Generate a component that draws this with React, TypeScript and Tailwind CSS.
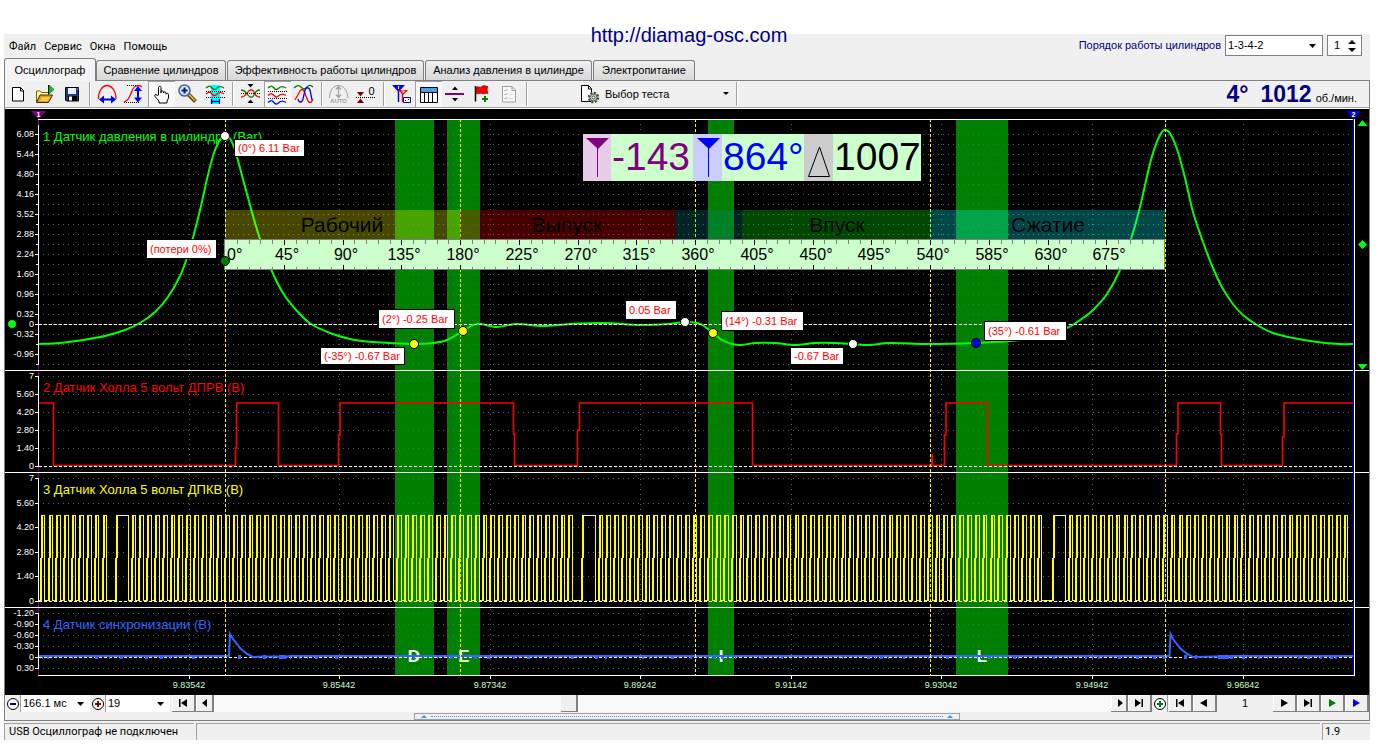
import React, { useState } from "react";

type Point = [number, number];

const SANS = "font-['Liberation_Sans',Arial,sans-serif]";
const TAHOMA = "font-[Roboto,'Noto_Sans',sans-serif]";

/* ---------- toolbar icons ---------- */

function Icon({ children }: { children: React.ReactNode }) {
  return (
    <svg width="27" height="26" viewBox="0 0 27 26" fill="none" aria-hidden="true">
      {children}
    </svg>
  );
}

const icons: Record<string, React.ReactNode> = {
  new: <path d="M7.5 6.5h8l3 3v10.500h-11zM15.500 6.500v3.500h3" fill="#fff" stroke="#000" />,
  open: (
    <>
      <path d="M4.500 21v-11h4l1 1.500h7v3" fill="#ffff99" stroke="#806000" />
      <path d="M4.500 21.500l3.500-7.500h12.500l-4 7.500z" fill="#d8a020" stroke="#403000" />
      <path d="M8 20l2-4h8l-2 4z" fill="#f0c850" />
      <path d="M16.500 4v9" stroke="#000" />
      <path d="M17 4l5 4.500-5 4.500z" fill="#00c830" stroke="#006000" strokeWidth=".6" />
    </>
  ),
  save: (
    <>
      <path d="M6.500 6.500h13v13.500h-12l-1-1z" fill="#203a80" stroke="#000" />
      <path d="M9 7h8v6h-8z" fill="#e8f0ff" />
      <path d="M9 15h9v5h-9z" fill="#000" />
      <path d="M10 15.500h3v4h-3z" fill="#fff" />
      <path d="M18 8h1.500" stroke="#9ac" />
    </>
  ),
  period: (
    <>
      <path d="M4.500 18C4.500 9 9 4.500 13 4.500S22 9 22 18" stroke="#f00" strokeWidth="1.300" />
      <path d="M7 18.500h13" stroke="#00f" strokeWidth="2" />
      <path d="M5 18.500l5-4v8zM22 18.500l-5-4v8z" fill="#00f" />
    </>
  ),
  amplitude: (
    <>
      <path d="M6 4.500h14M3 21.500h15" stroke="#000" strokeDasharray="1 1" />
      <path d="M3 21C10 20 10 7 14 5.500C16 4.500 19 4.500 21 6" stroke="#f00" strokeWidth="1.300" />
      <path d="M17 7v13" stroke="#00f" strokeWidth="2" />
      <path d="M17 5l-4 5h8zM17 21.500l-4-5h8z" fill="#00f" />
    </>
  ),
  hand: (
    <path
      d="M10.500 14V6.500c0-1.500 2.500-1.500 2.500 0V12v-1.500c0-1 2.500-1 2.500.5v1c0-1.500 2.500-1.500 2.500.2v1c0-1.200 2.500-1.200 2.500.3V17l-1.500 3v2h-8v-2L7 15.500c-1-2 .8-2.500 2-1.200z"
      fill="#fff"
      stroke="#000"
    />
  ),
  zoom: (
    <>
      <path d="M13.500 13.500l7 7" stroke="#705010" strokeWidth="4" />
      <path d="M14 13.500l6 6" stroke="#e8b848" strokeWidth="1.500" />
      <circle cx="9.500" cy="9.500" r="5.500" fill="#cfeaff" stroke="#4868a0" strokeWidth="1.600" />
      <path d="M6.500 9.500h6M9.500 6.500v6" stroke="#102060" strokeWidth="2" />
    </>
  ),
  range: (
    <>
      <path d="M9 4h9v19h-9z" fill="#0ff" />
      <path d="M4 7c3-2.500 4-2.500 6 0s3 2 5 0 4-2 7 0" stroke="#008000" strokeWidth="1.300" />
      <path d="M4 10.500h19" stroke="#000" strokeDasharray="1 1" />
      <path d="M4 13c3-2.500 4-2.500 6 0s3 2 5 0 4-2 7 0" stroke="#f00" strokeWidth="1.300" />
      <path d="M4 16.500h19" stroke="#000" strokeDasharray="1 1" />
      <path d="M9.500 18v5M17.500 18v5M9 20.500h9" stroke="#0000a0" strokeWidth="1.300" />
    </>
  ),
  center: (
    <>
      <path d="M10.500 3h6l-3 3.500zM10.500 22h6l-3-3.500z" fill="#000" />
      <path d="M4 12.500h19" stroke="#000" strokeDasharray="1 1" />
      <path d="M4 16c3 0 4-1 6-4s5-5 7-1 3 5 6 5" stroke="#f00" strokeWidth="1.300" />
      <path d="M4 9c3 0 4 1 6 4s5 5 7 1 3-5 6-5" stroke="#008000" strokeWidth="1.300" />
    </>
  ),
  split: (
    <>
      <path d="M4 7c3-2.500 4-2.500 6 0s3 2 5 0 4-2 7 0" stroke="#008000" strokeWidth="1.300" />
      <path d="M4 10.500h19M4 17.500h19" stroke="#000" strokeDasharray="1 1" />
      <path d="M4 14.500c3-2.500 4-2.500 6 0s3 2 5 0 4-2 7 0" stroke="#f00" strokeWidth="1.300" />
      <path d="M4 21.500c3-2.500 4-2.500 6 0s3 2 5 0 4-2 7 0" stroke="#00f" strokeWidth="1.300" />
    </>
  ),
  overlay: (
    <>
      <path d="M3 7c3-2.500 5-3.500 7-1s4 2.500 6 0 4-2 6 0" stroke="#008000" strokeWidth="1.300" />
      <path d="M4 19l5-9c1.500-2 2.500-2 4 0l4 10c1 2 3 2 4 0l1-2" stroke="#f00" strokeWidth="1.300" />
      <path d="M7 18c1 4 4 4 5 0l2-9c1-3 4-3 5 0l2 10" stroke="#00f" strokeWidth="1.300" />
    </>
  ),
  auto: (
    <>
      <path d="M3.500 17C4 8 8 4.500 12.500 4.500S21 8 22 17" stroke="#a0a0a0" />
      <path d="M12.500 6v10M10 8.500l2.500-3 2.500 3M10 13.500l2.500 3 2.500-3" stroke="#a0a0a0" strokeWidth="1.200" />
      <text x="12.500" y="22" fontSize="6" fontWeight="bold" textAnchor="middle" fill="#a0a0a0">AUTO</text>
    </>
  ),
  zero: (
    <>
      <path d="M4 11h7l-3.500 4.500zM4 22h7l-3.500-4.500z" fill="#800000" />
      <path d="M3 16.500h19" stroke="#000" strokeDasharray="1 1" />
      <text x="18.500" y="14" fontSize="11" textAnchor="middle" fill="#000">0</text>
    </>
  ),
  markers: (
    <>
      <path d="M4 4h13l-6.500 7z" fill="#00f" />
      <path d="M10.500 8v13" stroke="#00f" strokeWidth="1.500" />
      <path d="M10 9h10l-5 5z" fill="#f00" />
      <path d="M14.500 12v9" stroke="#f00" strokeWidth="1.500" />
      <path d="M10.500 5v3M13.500 10h3l-2 2" stroke="#fff" />
      <path d="M15.500 16.500h7v5h-7z" fill="#fff" stroke="#000080" />
      <path d="M17 19.500h1m2-1h1" stroke="#000080" />
    </>
  ),
  table: (
    <>
      <path d="M5.500 6.500h17v15h-17z" fill="#fff" stroke="#000" />
      <path d="M6 7h16v4H6z" fill="#4aa0e8" />
      <path d="M5 11.500h18M9.500 11v10M13.500 11v10M17.500 11v10" stroke="#000" />
    </>
  ),
  divide: (
    <>
      <path d="M3 13h19" stroke="#800080" strokeWidth="2" />
      <path d="M10 9h6l-3-3.500zM10 17h6l-3 3.500z" fill="#000" />
    </>
  ),
  flag: (
    <>
      <path d="M6.500 5v15.500" stroke="#000" strokeWidth="1.500" />
      <path d="M7 6.500c2-2 4 1 6-1s4 0 6 0l-1 3 1 4c-2-1-4 1-6 0s-4 1-6 0z" fill="#f00" stroke="#500" strokeWidth=".6" />
      <path d="M16 15v6M13 18h6" stroke="#008000" strokeWidth="2" />
    </>
  ),
  checklist: (
    <>
      <path d="M6.500 5.500h9.500l3.500 3.500v12h-13zM16 5.500v4h3.500" fill="#f8f8f8" stroke="#a0a0a0" />
      <path d="M8.500 9l1 1 2-2M8.500 13l1 1 2-2M8.500 17l1 1 2-2" stroke="#a0a0a0" />
      <path d="M13 13.500h4M13 17.500h4" stroke="#ddd" />
    </>
  ),
};

interface Tool {
  id: string;
  label: string;
  pressed?: boolean;
}

const toolGroups: Tool[][] = [
  [
    { id: "new", label: "Новый" },
    { id: "open", label: "Открыть" },
    { id: "save", label: "Сохранить" },
  ],
  [
    { id: "period", label: "Период" },
    { id: "amplitude", label: "Амплитуда" },
    { id: "hand", label: "Перемещение", pressed: true },
    { id: "zoom", label: "Масштаб" },
    { id: "range", label: "Диапазон" },
  ],
  [
    { id: "center", label: "По центру" },
    { id: "split", label: "Раздельно", pressed: true },
    { id: "overlay", label: "Совместно" },
  ],
  [
    { id: "auto", label: "Авто" },
    { id: "zero", label: "Ноль" },
  ],
  [
    { id: "markers", label: "Маркеры" },
    { id: "table", label: "Таблица", pressed: true },
    { id: "divide", label: "Разделить" },
    { id: "flag", label: "Добавить флаг" },
    { id: "checklist", label: "Отчёт" },
  ],
];

function Separator() {
  return (
    <div className="flex w-2 shrink-0 justify-center py-px">
      <div className="w-0.5 border-l border-[#a0a0a0] bg-white" />
    </div>
  );
}

function Toolbar() {
  return (
    <div className="flex h-[26px] items-stretch">
      {toolGroups.map((group, i) => (
        <React.Fragment key={i}>
          {group.map((t) => (
            <button
              key={t.id}
              type="button"
              aria-label={t.label}
              aria-pressed={t.pressed ?? false}
              className={
                t.pressed
                  ? "w-[27px] shrink-0 bg-[#f8f8f8] shadow-[inset_1px_1px_0_#a0a0a0]"
                  : "w-[27px] shrink-0"
              }
            >
              <Icon>{icons[t.id]}</Icon>
            </button>
          ))}
          <Separator />
        </React.Fragment>
      ))}
      <button type="button" className="ml-12 flex w-[154px] shrink-0 items-center text-[11px]">
        <svg width="22" height="22" viewBox="0 0 22 22" fill="none" aria-hidden="true">
          <path d="M2.500 2.500h7l3 3v13h-10zM9.500 2.500v3.500h3" fill="#fff" stroke="#000" />
          <circle cx="14.500" cy="14.500" r="4.500" fill="#c8dcc8" stroke="#405040" strokeWidth="2.500" strokeDasharray="2 1.500" />
          <circle cx="14.500" cy="14.500" r="3.500" fill="#c8dcc8" stroke="#506850" />
          <circle cx="14.500" cy="14.500" r="1.500" fill="#fff" stroke="#405040" />
        </svg>
        <span className="ml-1 grow text-left">Выбор теста</span>
        <svg width="6" height="4" viewBox="0 0 6 4" className="mr-1" aria-hidden="true">
          <path d="M0 0h6L3 3z" fill="#000" />
        </svg>
      </button>
      <Separator />
      <div className="ml-auto flex items-baseline pr-3 text-[#000080]">
        <span className="text-[23px] leading-[26px] font-bold">4°</span>
        <span className="ml-3 text-[23px] leading-[26px] font-bold">1012</span>
        <span className="ml-1 text-[11px] text-black">об./мин.</span>
      </div>
    </div>
  );
}

/* ---------- chart data ---------- */

const pressure: Point[] = [
  [39, 344], [60, 343], [83, 340], [105, 336], [125, 330], [140, 323], [155, 312], [168, 297], [180, 276],
  [188, 255], [194, 234], [201, 206], [207, 179], [213, 156], [218, 143], [222, 137], [225, 135], [229, 137],
  [234, 147], [240, 168], [247, 194], [253, 216], [260, 239], [271, 269], [283, 293], [297, 311], [311, 324],
  [330, 333], [350, 339], [373, 342], [413, 344], [433, 343], [447, 340], [463, 331], [473, 325], [481, 324],
  [497, 327], [517, 324], [543, 326], [570, 324], [603, 323], [640, 325], [668, 324], [685, 322], [697, 323],
  [704, 326], [713, 333], [722, 340], [732, 344], [742, 345], [755, 343], [775, 343], [795, 345], [815, 343],
  [835, 343], [853, 344], [870, 345], [890, 343], [930, 344], [976, 343], [1010, 341], [1040, 337], [1067, 328],
  [1083, 318], [1093, 310], [1107, 294], [1120, 270], [1131, 239], [1140, 207], [1148, 172], [1153, 153],
  [1160, 135], [1165, 130], [1171, 135], [1178, 152], [1185, 178], [1193, 212], [1203, 242], [1213, 268],
  [1223, 289], [1233, 304], [1243, 315], [1257, 325], [1273, 333], [1293, 338], [1317, 342], [1340, 344],
  [1353, 344],
];

function smooth(p: Point[]): string {
  let d = `M${p[0][0]} ${p[0][1]}`;
  for (let i = 0; i < p.length - 1; i++) {
    const a = p[Math.max(i - 1, 0)];
    const b = p[i];
    const c = p[i + 1];
    const e = p[Math.min(i + 2, p.length - 1)];
    d += `C${b[0] + (c[0] - a[0]) / 6} ${b[1] + (c[1] - a[1]) / 6} ${c[0] - (e[0] - b[0]) / 6} ${c[1] - (e[1] - b[1]) / 6} ${c[0]} ${c[1]}`;
  }
  return d;
}

const camshaft =
  "M39 403H53.500V465.500H230V467H231V465.500H235.500V448H236.500V403H278.500V465.500H338.500V435H340V403H513.500V434H514.500V465.500H577.500V430H579.500V403H752.500V465.500H932V455H932.500V465.500H944.500V435H946V403H987.500V465.500H1176.500V434H1178V403H1220.500V434H1221.500V465.500H1282.500V437H1284V403H1353";

function crankshaft() {
  const highs: Point[] = [];
  for (let i = 8; i >= 0; i--) highs.push([102.5 - i * 7.7, 106 - i * 7.7]);
  highs.push([115.5, 127.5]);
  for (let i = 0; i <= 56; i++) highs.push([131.5 + i * 7.8, 135.3 + i * 7.8]);
  highs.push([581.5, 594.5]);
  for (let i = 0; i <= 56; i++) highs.push([598.5 + i * 7.84, 602.3 + i * 7.84]);
  highs.push([1052.5, 1064.5]);
  for (let x = 1068.5; x < 1350; x += 7.86) highs.push([x, x + 3.8]);
  let d = "M39 600.500";
  let rises = "";
  for (const [from, to] of highs) {
    const a = Math.round(from);
    const b = Math.round(to) + 0.5;
    d += `H${a + 0.5}V515.500H${b}V600.500`;
    rises += `M${a} 601V558M${a + 1} 558V515`;
  }
  return { d: d + "H1353", rises };
}

const crank = crankshaft();

function syncNoise(): string {
  let d = "";
  let seed = 7;
  for (let x = 42; x < 1350; ) {
    seed = (seed * 73 + 41) % 997;
    d += `M${x} 657h${1 + (seed % 3)}`;
    x += 5 + (seed % 23);
  }
  return d;
}

const bands: Point[] = [[395, 434], [447, 480], [708, 734], [956, 1008]];
const strokes = [225, 460, 695, 930, 1165];

const channels = [
  { color: "#00ff00", title: "1 Датчик давления в цилиндре (Bar)", titleY: 141, zero: 324, axis: [125, 365],
    grid: Array.from({ length: 24 }, (_, i) => 134 + i * 10),
    ticks: [["6.08", 134], ["5.44", 154], ["4.80", 174], ["4.16", 194], ["3.52", 214], ["2.88", 234], ["2.24", 254], ["1.60", 274], ["0.96", 294], ["0.32", 314], ["0", 324], ["-0.32", 334], ["-0.96", 354]] },
  { color: "#ff0000", title: "2 Датчик Холла 5 вольт ДПРВ (В)", titleY: 392, zero: 466, axis: [376, 466],
    grid: [376, 394, 412, 430, 448],
    ticks: [["7", 376], ["5.60", 394], ["4.20", 412], ["2.80", 430], ["1.40", 448], ["0", 466]] },
  { color: "#ffff00", title: "3 Датчик Холла 5 вольт ДПКВ (В)", titleY: 494, zero: 601, axis: [478, 601],
    grid: [478, 503, 527, 552, 576],
    ticks: [["7", 478], ["5.60", 503], ["4.20", 527], ["2.80", 552], ["1.40", 576], ["0", 601]] },
  { color: "#3366ff", title: "4 Датчик синхронизации (В)", titleY: 629, zero: 657, axis: [613, 668],
    grid: [613, 624, 635, 646, 668],
    ticks: [["-1.20", 613], ["-0.90", 624], ["-0.60", 635], ["-0.30", 646], ["0", 657], ["0.30", 668]] },
] as { color: string; title: string; titleY: number; zero: number; axis: Point; grid: number[]; ticks: [string, number][] }[];

const times: [string, number][] = [
  ["9.83542", 189], ["9.85442", 339], ["9.87342", 490], ["9.89242", 640],
  ["9.91142", 791], ["9.93042", 941], ["9.94942", 1092], ["9.96842", 1243],
];

const phases = [
  { label: "Рабочий", x: 225, end: 460, center: 342, fill: "#ffff00" },
  { label: "Выпуск", x: 460, end: 675, center: 567, fill: "#ff0000" },
  { label: "", x: 675, end: 742, center: 708, fill: "#008080" },
  { label: "Впуск", x: 742, end: 930, center: 837, fill: "#00ff00" },
  { label: "Сжатие", x: 930, end: 1165, center: 1048, fill: "#00ffff" },
];

const notes = [
  { text: "(0°) 6.11 Bar", x: 235, y: 140, w: 69, h: 16 },
  { text: "(потери 0%)", x: 147, y: 240, w: 69, h: 18 },
  { text: "(2°) -0.25 Bar", x: 379, y: 310, w: 75, h: 18 },
  { text: "(-35°) -0.67 Bar", x: 321, y: 348, w: 83, h: 16 },
  { text: "0.05 Bar", x: 626, y: 301, w: 50, h: 18 },
  { text: "(14°) -0.31 Bar", x: 722, y: 312, w: 81, h: 18 },
  { text: "-0.67 Bar", x: 791, y: 348, w: 52, h: 16 },
  { text: "(35°) -0.61 Bar", x: 985, y: 322, w: 81, h: 18 },
];

const dots = [
  { x: 225, y: 136, fill: "#fff" },
  { x: 225, y: 261, fill: "#008000" },
  { x: 414, y: 344, fill: "#ff0" },
  { x: 463, y: 331, fill: "#ff0" },
  { x: 685, y: 322, fill: "#fff" },
  { x: 713, y: 333, fill: "#ff0" },
  { x: 853, y: 344, fill: "#fff" },
  { x: 976, y: 343, fill: "#00f" },
  { x: 12, y: 324, fill: "#0f0" },
];

function Ruler() {
  return (
    <g shapeRendering="crispEdges">
      <rect x="225" y="239" width="940" height="31" fill="#ccffcc" />
      <path d="M225 239.500H1165M225 269.500H1165M224.500 239V270M1164.500 239V270" stroke="#808080" />
      {Array.from({ length: 79 }, (_, i) => {
        const x = Math.round(225 + (i + 1) * 11.75) + 0.5;
        const major = (i + 1) % 5 === 0;
        return major ? (
          <path key={i} d={`M${x} 240v5M${x} 265v5`} stroke="#000" />
        ) : (
          <path key={i} d={`M${x} 240v4M${x} 267v3`} stroke="#808080" />
        );
      })}
      <text x="227" y="260" fontSize="16">0°</text>
      {Array.from({ length: 15 }, (_, i) => (
        <text key={i} x={Math.round(228 + (i + 1) * 58.75)} y="260" fontSize="16" textAnchor="middle">
          {`${(i + 1) * 45}°`}
        </text>
      ))}
    </g>
  );
}

function Readout() {
  return (
    <g>
      <rect x="583" y="134" width="338" height="47" fill="#ccffcc" />
      <rect x="583" y="134" width="28" height="47" fill="#e6cce6" />
      <rect x="693" y="134" width="29" height="47" fill="#ccccff" />
      <rect x="804" y="134" width="29" height="47" fill="#cccccc" />
      <path d="M586 138h23l-11 11z" fill="#800080" />
      <path d="M597.500 148v29" stroke="#800080" shapeRendering="crispEdges" />
      <path d="M697 138h23l-11 11z" fill="#00f" />
      <path d="M708.500 148v29" stroke="#00f" shapeRendering="crispEdges" />
      <path d="M819.500 147L808.500 176.500H829.500Z" fill="none" stroke="#000" />
      <text x="612" y="170" fontSize="39" fill="#800080">-143</text>
      <text x="723" y="170" fontSize="39" fill="#0000ff">864°</text>
      <text x="834" y="170" fontSize="39" fill="#000">1007</text>
    </g>
  );
}

function Chart() {
  return (
    <svg viewBox="5 109 1364 586" className={`block h-auto w-full bg-black ${SANS}`} role="img" aria-label="Осциллограммы">
      <g shapeRendering="crispEdges">
        {bands.map(([a, b]) => (
          <rect key={a} x={a} y="120" width={b - a} height="555" fill="#008000" />
        ))}
        {channels.flatMap((c) => c.grid).map((y) => (
          <path key={y} d={`M43 ${y + 0.5}H1352`} stroke="#606060" strokeDasharray="1 4" />
        ))}
        {times.map(([, x]) => (
          <path key={x} d={`M${x + 0.5} 124V674`} stroke="#606060" strokeDasharray="1 4" />
        ))}
      </g>

      {channels.map((c) => (
        <text key={c.title} x="43" y={c.titleY} fontSize="13" fill={c.color}>{c.title}</text>
      ))}

      <path d={smooth(pressure)} fill="none" stroke="#00ff00" strokeWidth="2" />
      <path d={camshaft} fill="none" stroke="#ff0000" strokeWidth="1.600" />
      <path d={crank.d} fill="none" stroke="#ffff00" shapeRendering="crispEdges" />
      <path d={crank.rises} fill="none" stroke="#ffff00" strokeWidth="2" shapeRendering="crispEdges" />

      {[["D", 414], ["E", 464], ["I", 721], ["L", 982]].map(([s, x]) => (
        <text key={s} x={x} y="662" fontSize="17" fontWeight="bold" textAnchor="middle" fill="#fff">{s}</text>
      ))}

      <g shapeRendering="crispEdges">
        {channels.map((c) => (
          <path key={c.zero} d={`M39 ${c.zero + 0.5}H1353`} stroke="#fff" strokeDasharray="3 2" />
        ))}
      </g>

      <path
        d="M39 656H229L230 634L233 639L240 648L247 654L253 657L262 656.500H278L284 657L290 656H1169.500L1170.500 634L1173 639L1180 648L1187 654L1193 657L1215 656.500H1228L1235 656H1353"
        fill="none"
        stroke="#3366ff"
        strokeWidth="2"
      />
      <path d={syncNoise()} stroke="#3366ff" strokeWidth="4" shapeRendering="crispEdges" />
      <path d="M279 657h7M1220 657h9" stroke="#3366ff" strokeWidth="4" />

      <g shapeRendering="crispEdges">
        {strokes.map((x) => (
          <path key={x} d={`M${x + 0.5} 119V675`} stroke="#ffff00" strokeDasharray="3 2" />
        ))}
        {phases.map((p) => (
          <rect key={p.x} x={p.x} y="210" width={p.end - p.x} height="30" fill={p.fill} fillOpacity="0.280" />
        ))}
      </g>
      {phases.map((p) => (
        <text key={p.center} x={p.center} y="232" fontSize="21" textAnchor="middle" fill="#000">{p.label}</text>
      ))}
      <Ruler />

      <g shapeRendering="crispEdges" fill="none">
        <path d="M38.500 117V675" stroke="#800080" />
        {channels.map((c) => (
          <path key={c.title} d={`M38.500 ${c.axis[0]}V${c.axis[1]}`} stroke="#fff" />
        ))}
        {channels.flatMap((c) => c.ticks).map(([t, y]) => (
          <path key={t + y} d={`M35 ${y + 0.5}h4`} stroke="#fff" />
        ))}
        {channels[0].grid.map((y) => (
          <path key={y} d={`M36 ${y + 0.5}h3`} stroke="#fff" />
        ))}
        {times.map(([, x]) => (
          <path key={x} d={`M${x + 0.5} 675v4`} stroke="#fff" />
        ))}
        <path d="M38 119.500H1355M5 370.500H1369M5 472.500H1369M5 607.500H1369M38 675.500H1355M1354.500 119V676" stroke="#fff" />
        <path d="M1353.500 117V675" stroke="#0000ff" />
      </g>

      {channels.flatMap((c) => c.ticks).map(([t, y]) => (
        <text key={t + y} x="34" y={y + 3} fontSize="9" textAnchor="end" fill="#fff">{t}</text>
      ))}
      {times.map(([t, x]) => (
        <text key={t} x={x} y="688" fontSize="9" textAnchor="middle" fill="#ccffcc">{t}</text>
      ))}

      {dots.map((d) => (
        <circle key={`${d.x}-${d.y}`} cx={d.x} cy={d.y} r="4.500" fill={d.fill} stroke="#000" />
      ))}
      {notes.map((n) => (
        <g key={n.text}>
          <rect x={n.x - 0.5} y={n.y - 0.5} width={n.w + 1} height={n.h + 1} fill="#fff" stroke="#000" />
          <text x={n.x + 3} y={n.y + n.h / 2 + 4} fontSize="11" fill="#ff0000">{n.text}</text>
        </g>
      ))}
      <Readout />

      <path d="M31 111h15l-7.500 8z" fill="#800080" />
      <text x="38.500" y="117" fontSize="7" fontWeight="bold" textAnchor="middle" fill="#fff">1</text>
      <path d="M1346 111h15l-7.500 8z" fill="#0000ff" />
      <text x="1353.500" y="117" fontSize="7" fontWeight="bold" textAnchor="middle" fill="#fff">2</text>
      <path d="M1357.500 126h10l-5-6zM1362.500 240l4.500 4.500-4.500 4.500-4.500-4.500zM1357.500 364h10l-5 6z" fill="#00ff00" />
    </svg>
  );
}

/* ---------- form controls ---------- */

function Combo({ label, options, className }: { label: string; options: string[]; className: string }) {
  return (
    <div className={`relative shrink-0 bg-white ${className}`}>
      <select aria-label={label} className="block h-full w-full appearance-none bg-transparent pl-0.5 text-[11px] outline-none">
        {options.map((o) => (
          <option key={o}>{o}</option>
        ))}
      </select>
      <svg width="7" height="4" viewBox="0 0 7 4" className="pointer-events-none absolute inset-y-0 right-1.5 my-auto" aria-hidden="true">
        <path d="M0 0h7L3.500 4z" fill="#000" />
      </svg>
    </div>
  );
}

const transport: Record<string, string> = {
  first: "M6 2h1.500v8H6zM14 2v8L8 6z",
  back: "M13 2v8L6 6z",
  small: "M9 2v8l5-4z",
  smallBack: "M13 2v8L8 6z",
  play: "M7 2v8l7-4z",
  last: "M6 2v8l6-4zM12.500 2H14v8h-1.500z",
};

function NavButton({ label, shape, color = "#000", className }: { label: string; shape: string; color?: string; className: string }) {
  return (
    <button
      type="button"
      aria-label={label}
      className={`flex shrink-0 items-center justify-center border-r-2 border-b border-[#808080] bg-[#f0f0f0] shadow-[inset_1px_1px_0_#fff] ${className}`}
    >
      <svg width="20" height="12" viewBox="0 0 20 12" className="shrink-0" aria-hidden="true">
        <path d={transport[shape]} fill={color} />
      </svg>
    </button>
  );
}

function ScaleButton({ label, color, plus }: { label: string; color: string; plus: boolean }) {
  return (
    <button type="button" aria-label={label} className="flex w-4 shrink-0 items-center justify-center border-r border-[#a0a0a0] bg-[#f0f0f0]">
      <svg width="14" height="14" viewBox="0 0 14 14" fill="none" className="shrink-0" aria-hidden="true">
        <circle cx="7" cy="7" r="5.500" fill="#fff" stroke="#000" />
        <path d={plus ? "M4 7h6M7 4v6" : "M4 7h6"} stroke={color} strokeWidth="2" />
      </svg>
    </button>
  );
}

function TransportBar() {
  return (
    <div className="flex h-[17px]">
      <ScaleButton label="Уменьшить" color="#000080" plus={false} />
      <Combo label="Развёртка" options={["166.1 мс"]} className="w-[69px]" />
      <ScaleButton label="Увеличить" color="#800000" plus />
      <Combo label="Цикл" options={["19"]} className="w-16" />
      <NavButton label="К началу" shape="first" className="ml-0.5 w-6" />
      <NavButton label="Назад" shape="smallBack" className="w-[18px]" />
      <input
        type="range"
        aria-label="Положение"
        min={0}
        max={1000}
        defaultValue={394}
        className="h-full min-w-0 grow appearance-none bg-[#f9f9f9] [&::-webkit-slider-thumb]:h-[17px] [&::-webkit-slider-thumb]:w-[17px] [&::-webkit-slider-thumb]:appearance-none [&::-webkit-slider-thumb]:border-r-2 [&::-webkit-slider-thumb]:border-b [&::-webkit-slider-thumb]:border-[#808080] [&::-webkit-slider-thumb]:bg-[#f0f0f0]"
      />
      <NavButton label="Вперёд" shape="small" className="w-[17px]" />
      <NavButton label="К концу" shape="last" className="w-6" />
      <ScaleButton label="Добавить" color="#008000" plus />
      <NavButton label="Первый кадр" shape="first" className="ml-px w-6" />
      <NavButton label="Предыдущий кадр" shape="back" className="w-6" />
      <output className="w-14 text-center text-[11px] leading-[17px]">1</output>
      <NavButton label="Следующий кадр" shape="play" className="w-6" />
      <NavButton label="Последний кадр" shape="last" className="w-6" />
      <NavButton label="Пуск" shape="play" color="#008000" className="w-6" />
      <NavButton label="Запись" shape="play" color="#0000ff" className="w-6" />
    </div>
  );
}

/* ---------- page ---------- */

const tabs: [string, string][] = [
  ["Сравнение цилиндров", "w-[130px]"],
  ["Эффективность работы цилиндров", "w-[197px]"],
  ["Анализ давления в цилиндре", "w-[167px]"],
  ["Электропитание", "w-[102px]"],
];

export default function App() {
  const [frame, setFrame] = useState(1);
  return (
    <div className={`min-h-screen bg-white pt-[34px] pr-3 pl-1 text-black ${SANS}`}>
      <div className="relative bg-[#f0f0f0]">
        <a
          href="http://diamag-osc.com"
          className="absolute -top-[11px] left-1/2 -translate-x-1/2 pl-1 text-[20px] leading-6 text-[#000080]"
        >
          http://diamag-osc.com
        </a>
        <header className="flex h-6 items-start justify-between">
          <nav className={`flex gap-2 pt-[5px] pl-[5px] text-[11px] leading-4 ${TAHOMA}`}>
            {["Файл", "Сервис", "Окна", "Помощь"].map((m) => (
              <button key={m} type="button">{m}</button>
            ))}
          </nav>
          <div className="flex items-center gap-1 pt-px pr-2">
            <label htmlFor="firing-order" className="text-[11px] text-[#000080]">Порядок работы цилиндров</label>
            <div className="relative h-[21px] w-[98px] border border-[#808080] bg-white">
              <select id="firing-order" className="block h-full w-full appearance-none bg-transparent pl-0.5 text-[11px] outline-none">
                <option>1-3-4-2</option>
              </select>
              <svg width="7" height="4" viewBox="0 0 7 4" className="pointer-events-none absolute inset-y-0 right-1.5 my-auto" aria-hidden="true">
                <path d="M0 0h7L3.500 4z" fill="#000" />
              </svg>
            </div>
            <div className="flex h-[21px] w-[35px] border border-[#808080] bg-white">
              <input
                type="number"
                aria-label="Цилиндр"
                value={frame}
                onChange={(e) => setFrame(Number(e.target.value))}
                className="w-4 min-w-0 [appearance:textfield] pl-1.5 text-[11px] outline-none [&::-webkit-inner-spin-button]:appearance-none"
              />
              <div className="ml-1 flex flex-col justify-center gap-1">
                <button type="button" aria-label="Больше" onClick={() => setFrame(frame + 1)}>
                  <svg width="8" height="4" viewBox="0 0 8 4" className="block" aria-hidden="true"><path d="M0 4h8L4 0z" /></svg>
                </button>
                <button type="button" aria-label="Меньше" onClick={() => setFrame(frame - 1)}>
                  <svg width="8" height="4" viewBox="0 0 8 4" className="block" aria-hidden="true"><path d="M0 0h8L4 4z" /></svg>
                </button>
              </div>
            </div>
          </div>
        </header>

        <div role="tablist" className="flex items-end text-[11px]">
          <button
            role="tab"
            aria-selected="true"
            type="button"
            className="h-[23px] w-[92px] rounded-t-[3px] border border-b-0 border-[#808080] bg-[#f4f4f4]"
          >
            Осциллограф
          </button>
          <div className="flex h-[23px] grow items-end gap-px border-b border-[#808080]">
            {tabs.map(([t, w]) => (
              <button
                key={t}
                role="tab"
                aria-selected="false"
                type="button"
                className={`h-5 rounded-t-[3px] border border-b-0 border-[#808080] bg-linear-to-b from-[#f0f0f0] to-[#d8d8d8] whitespace-nowrap ${w}`}
              >
                {t}
              </button>
            ))}
          </div>
        </div>

        <main className="border-r border-b border-l border-[#808080]">
          <Toolbar />
          <div className="h-0.5 border-t border-[#a0a0a0] bg-white" />
          <Chart />
          <TransportBar />
          <div className="flex h-2 justify-center pt-px">
            <div className="flex h-[7px] w-[40%] items-center gap-1 border border-[#a0a0a0] px-1.5">
              <svg width="6" height="3" viewBox="0 0 6 3" aria-hidden="true"><path d="M0 3h6L3 0z" fill="#3399ff" /></svg>
              <div className="grow border-t border-dotted border-[#3399ff]" />
              <svg width="6" height="3" viewBox="0 0 6 3" aria-hidden="true"><path d="M0 3h6L3 0z" fill="#3399ff" /></svg>
            </div>
          </div>
        </main>

        <footer className={`flex gap-0.5 pt-0.5 text-[11px] leading-4 ${TAHOMA}`}>
          <div className="h-[17px] w-[190px] border-t border-l border-[#a0a0a0] pl-1">USB Осциллограф не подключен</div>
          <div className="grow border-t border-l border-[#a0a0a0]" />
          <div className="w-12 border-t border-l border-[#a0a0a0] pl-0.5">1.9</div>
        </footer>
      </div>
    </div>
  );
}
